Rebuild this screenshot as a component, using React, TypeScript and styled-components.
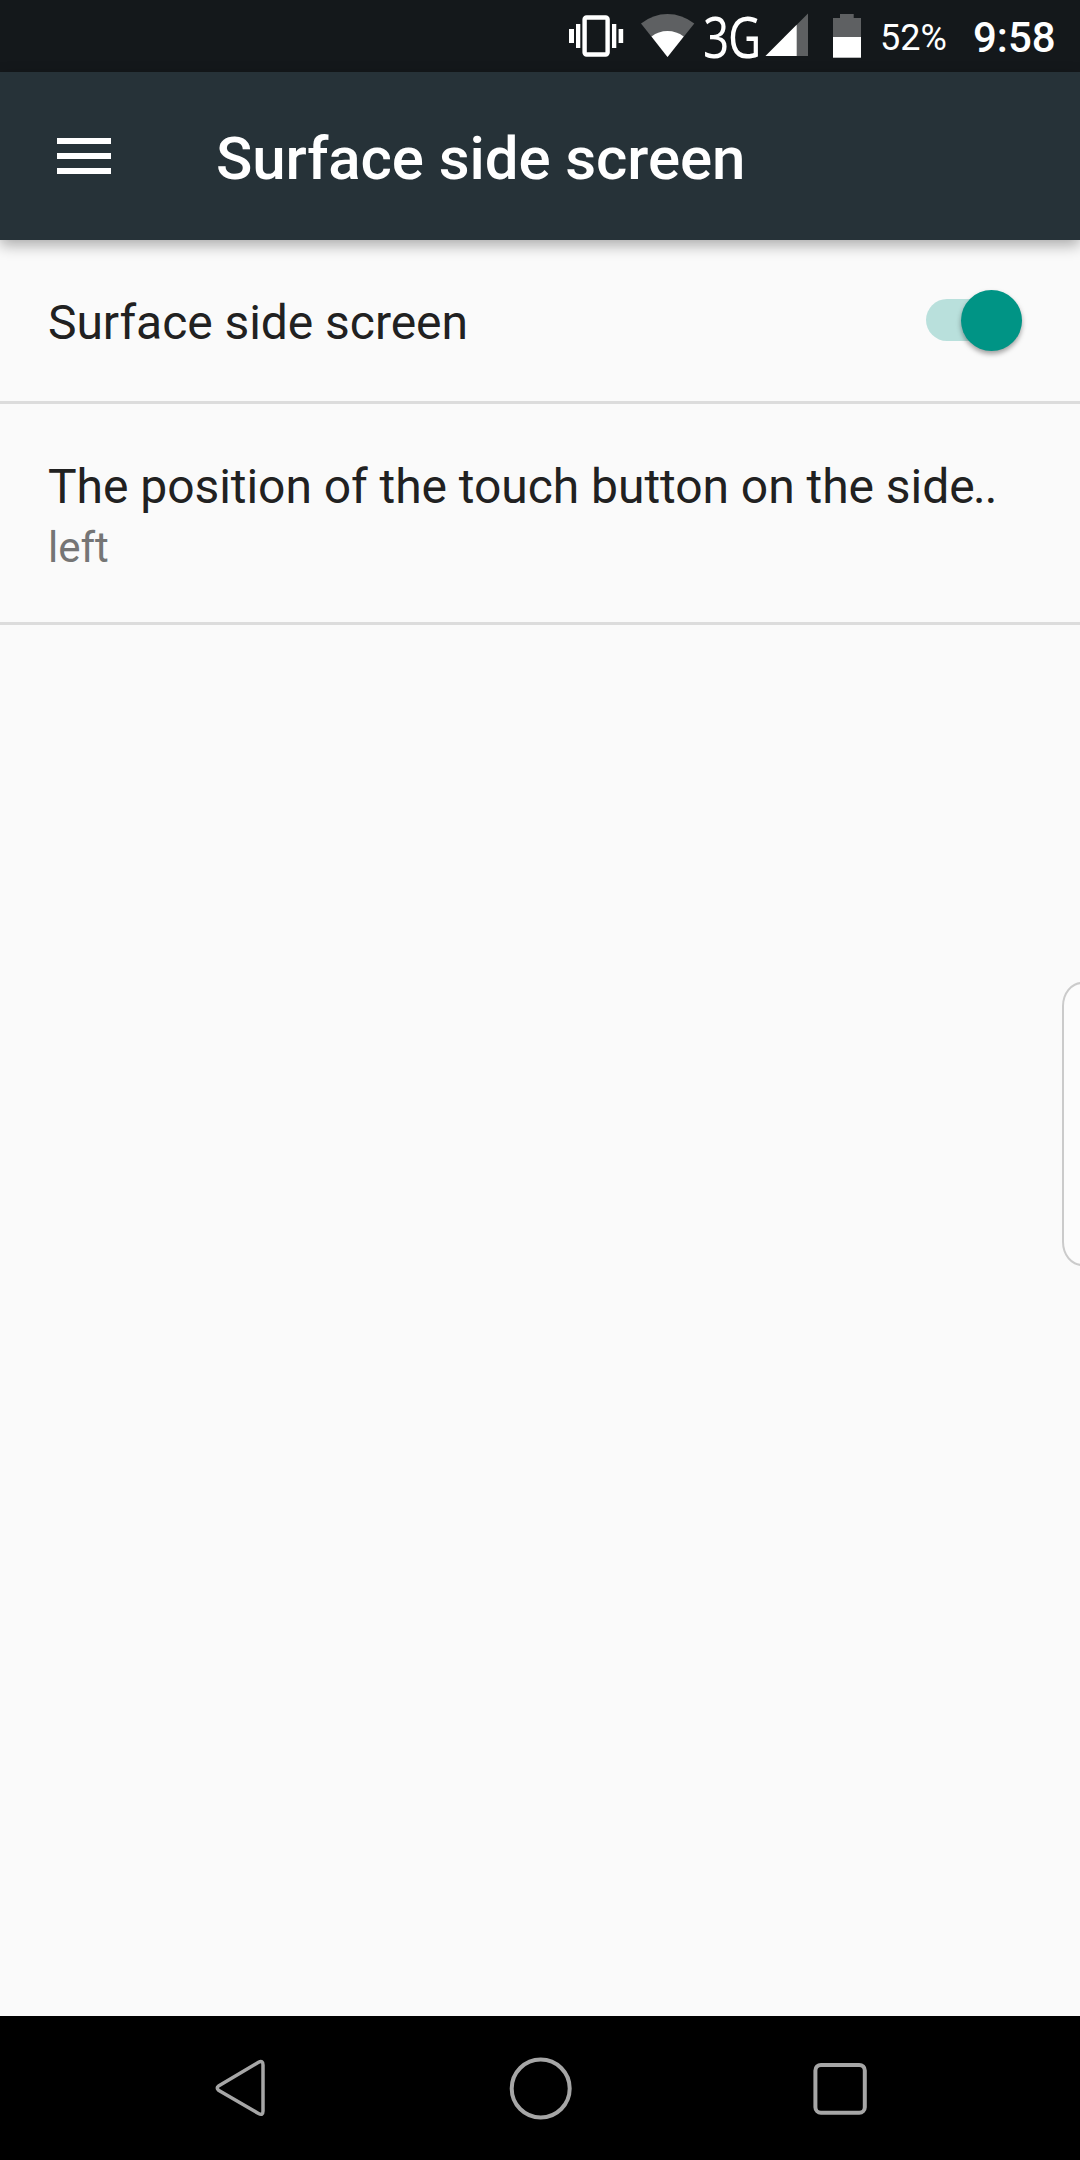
import React, { useState } from "react";
import styled, { createGlobalStyle } from "styled-components";

const GlobalStyle = createGlobalStyle`
  *, *::before, *::after { box-sizing: border-box; }
  body { margin: 0; background: #fafafa; }
`;

const Screen = styled.div`
  position: relative;
  display: flex;
  flex-direction: column;
  width: 1080px;
  height: 2160px;
  overflow: hidden;
  background: #fafafa;
  font-family: Roboto, "Liberation Sans", sans-serif;
`;

const StatusBar = styled.header`
  display: flex;
  justify-content: flex-end;
  height: 72px;
  padding-right: 24px;
  background: #14181b;
  color: #fff;
`;

const StatusIcon = styled.svg<{ $gap?: number }>`
  flex: none;
  display: block;
  height: 72px;
  margin-right: ${(p) => p.$gap ?? 0}px;
`;

const NetworkType = styled.div`
  flex: none;
  width: 74px;
  height: 72px;
  margin-right: -12px;
  font-family: "Noto Sans", "Open Sans", sans-serif;
  font-size: 56px;
  line-height: 72px;
  letter-spacing: -1.5px;
  white-space: nowrap;

  span {
    display: block;
    width: max-content;
    transform: scaleX(0.815);
    transform-origin: left center;
  }
`;

const StatusText = styled.div<{ $size: number; $width: number; $weight?: number; $line: number }>`
  width: ${(p) => p.$width}px;
  padding-top: 13px;
  font-size: ${(p) => p.$size}px;
  font-weight: ${(p) => p.$weight ?? 400};
  line-height: ${(p) => p.$line}px;
  white-space: nowrap;
`;

const AppBar = styled.div`
  position: relative;
  z-index: 1;
  flex: none;
  display: flex;
  align-items: flex-start;
  height: 168px;
  padding: 0 57px;
  background: #263238;
  color: #fff;
  box-shadow: 0 5px 14px rgba(0, 0, 0, 0.33);
`;

const MenuButton = styled.button`
  display: flex;
  flex-direction: column;
  gap: 9px;
  width: 54px;
  margin: 66px 105px 0 0;
  padding: 0;
  border: 0;
  background: none;
`;

const MenuLine = styled.span`
  height: 6px;
  background: #fff;
`;

const Title = styled.h1`
  margin: 51px 0 0;
  font-size: 60px;
  font-weight: 500;
  line-height: 71px;
  letter-spacing: -0.08px;
  white-space: nowrap;
`;

const List = styled.main`
  flex: 1;
`;

const Row = styled.section<{ $height: number }>`
  display: flex;
  justify-content: space-between;
  height: ${(p) => p.$height}px;
  padding: 54px 58px 0 48px;
  border-bottom: 3px solid #dcdcdc;
`;

const RowTitle = styled.div`
  color: #212121;
  font-size: 48px;
  line-height: 57px;
  letter-spacing: -0.05px;
  white-space: nowrap;
`;

const Dots = styled.span`
  margin-left: -1.5px;
  letter-spacing: -1px;
`;

const RowSummary = styled.div`
  margin-top: 8px;
  color: #757575;
  font-size: 42px;
  line-height: 49px;
`;

const SwitchTrack = styled.button<{ $on: boolean }>`
  display: flex;
  align-items: center;
  justify-content: ${(p) => (p.$on ? "flex-end" : "flex-start")};
  width: 96px;
  height: 42px;
  margin-top: 5px;
  padding: 0;
  border: 0;
  border-radius: 21px;
  background: ${(p) => (p.$on ? "#b9e0dc" : "#c4c4c4")};
`;

const SwitchThumb = styled.span<{ $on: boolean }>`
  flex: none;
  width: 61px;
  height: 61px;
  margin-top: 1px;
  border-radius: 50%;
  background: ${(p) => (p.$on ? "#009485" : "#ececec")};
  box-shadow: 0 3px 5px rgba(0, 0, 0, 0.36);
`;

const EdgeHandle = styled.div`
  position: absolute;
  top: 982px;
  right: -24px;
  width: 42px;
  height: 284px;
  border: 2px solid #cbcbcb;
  border-radius: 20px / 24px;
  background: #fcfcfc;
`;

const NavBar = styled.nav`
  flex: none;
  display: flex;
  justify-content: space-between;
  height: 144px;
  padding: 0 204px;
  background: #000;
`;

const NavButton = styled.button`
  width: 72px;
  height: 144px;
  padding: 0;
  border: 0;
  background: none;

  svg {
    display: block;
    fill: none;
    stroke: #a6a6a6;
  }
`;

export default function App() {
  const [enabled, setEnabled] = useState(true);

  return (
    <Screen>
      <GlobalStyle />
      <StatusBar>
        <StatusIcon $gap={17} width="55" viewBox="569 0 55 72" fill="#fff">
          <rect x="584.6" y="17.5" width="23" height="37" rx="2" fill="none" stroke="#fff" strokeWidth="4.4" />
          <path d="M569 29h5v14h-5zM576 24h4.3v24H576zM612 24h4.3v24H612zM618.6 29h4.6v14h-4.6z" />
        </StatusIcon>
        <StatusIcon $gap={8} width="54" viewBox="641 0 54 72">
          <path d="M667.5 57L641 23.5Q653 14 667.5 14T694.3 23.5Z" fill="#5e6062" />
          <path d="M667.5 57L651.5 36.5Q658.5 31 667.5 31T683.7 36.5Z" fill="#fff" />
        </StatusIcon>
        <NetworkType><span>3G</span></NetworkType>
        <StatusIcon $gap={25} width="43" viewBox="765 0 43 72">
          <path d="M765.5 56L808 13.5V56Z" fill="#5e6062" />
          <path d="M765.5 56L796.7 24.8V56Z" fill="#fff" />
        </StatusIcon>
        <StatusIcon $gap={19} width="28" viewBox="833 0 28 72">
          <path d="M833 18h7v-4h13.7v4H861v19.5h-28z" fill="#5e6062" />
          <path d="M833 37h28v20.7h-28z" fill="#fff" />
        </StatusIcon>
        <StatusText $size={36} $width={93} $line={50}>52%</StatusText>
        <StatusText $size={42} $width={83} $weight={500} $line={49}>9:58</StatusText>
      </StatusBar>

      <AppBar>
        <MenuButton aria-label="Menu">
          <MenuLine />
          <MenuLine />
          <MenuLine />
        </MenuButton>
        <Title>Surface side screen</Title>
      </AppBar>

      <List>
        <Row $height={164}>
          <RowTitle>Surface side screen</RowTitle>
          <SwitchTrack $on={enabled} role="switch" aria-checked={enabled} onClick={() => setEnabled(!enabled)}>
            <SwitchThumb $on={enabled} />
          </SwitchTrack>
        </Row>
        <Row $height={221}>
          <div>
            <RowTitle>The position of the touch button on the side<Dots>..</Dots></RowTitle>
            <RowSummary>left</RowSummary>
          </div>
        </Row>
      </List>

      <EdgeHandle />

      <NavBar>
        <NavButton aria-label="Back">
          <svg width="72" height="144" viewBox="204 2016 72 144" strokeWidth="3.5" strokeLinejoin="round">
            <path d="M218.5 2086L258.5 2062.3Q263 2060 263 2065V2111Q263 2116 258.5 2113.5L218.5 2090.2Q216 2088 218.5 2086Z" />
          </svg>
        </NavButton>
        <NavButton aria-label="Home">
          <svg width="72" height="144" viewBox="504 2016 72 144" strokeWidth="4">
            <circle cx="540.7" cy="2088.5" r="29" />
          </svg>
        </NavButton>
        <NavButton aria-label="Recents">
          <svg width="72" height="144" viewBox="804 2016 72 144" strokeWidth="4">
            <rect x="815.4" y="2064.9" width="49.4" height="47.8" rx="5.5" />
          </svg>
        </NavButton>
      </NavBar>
    </Screen>
  );
}
